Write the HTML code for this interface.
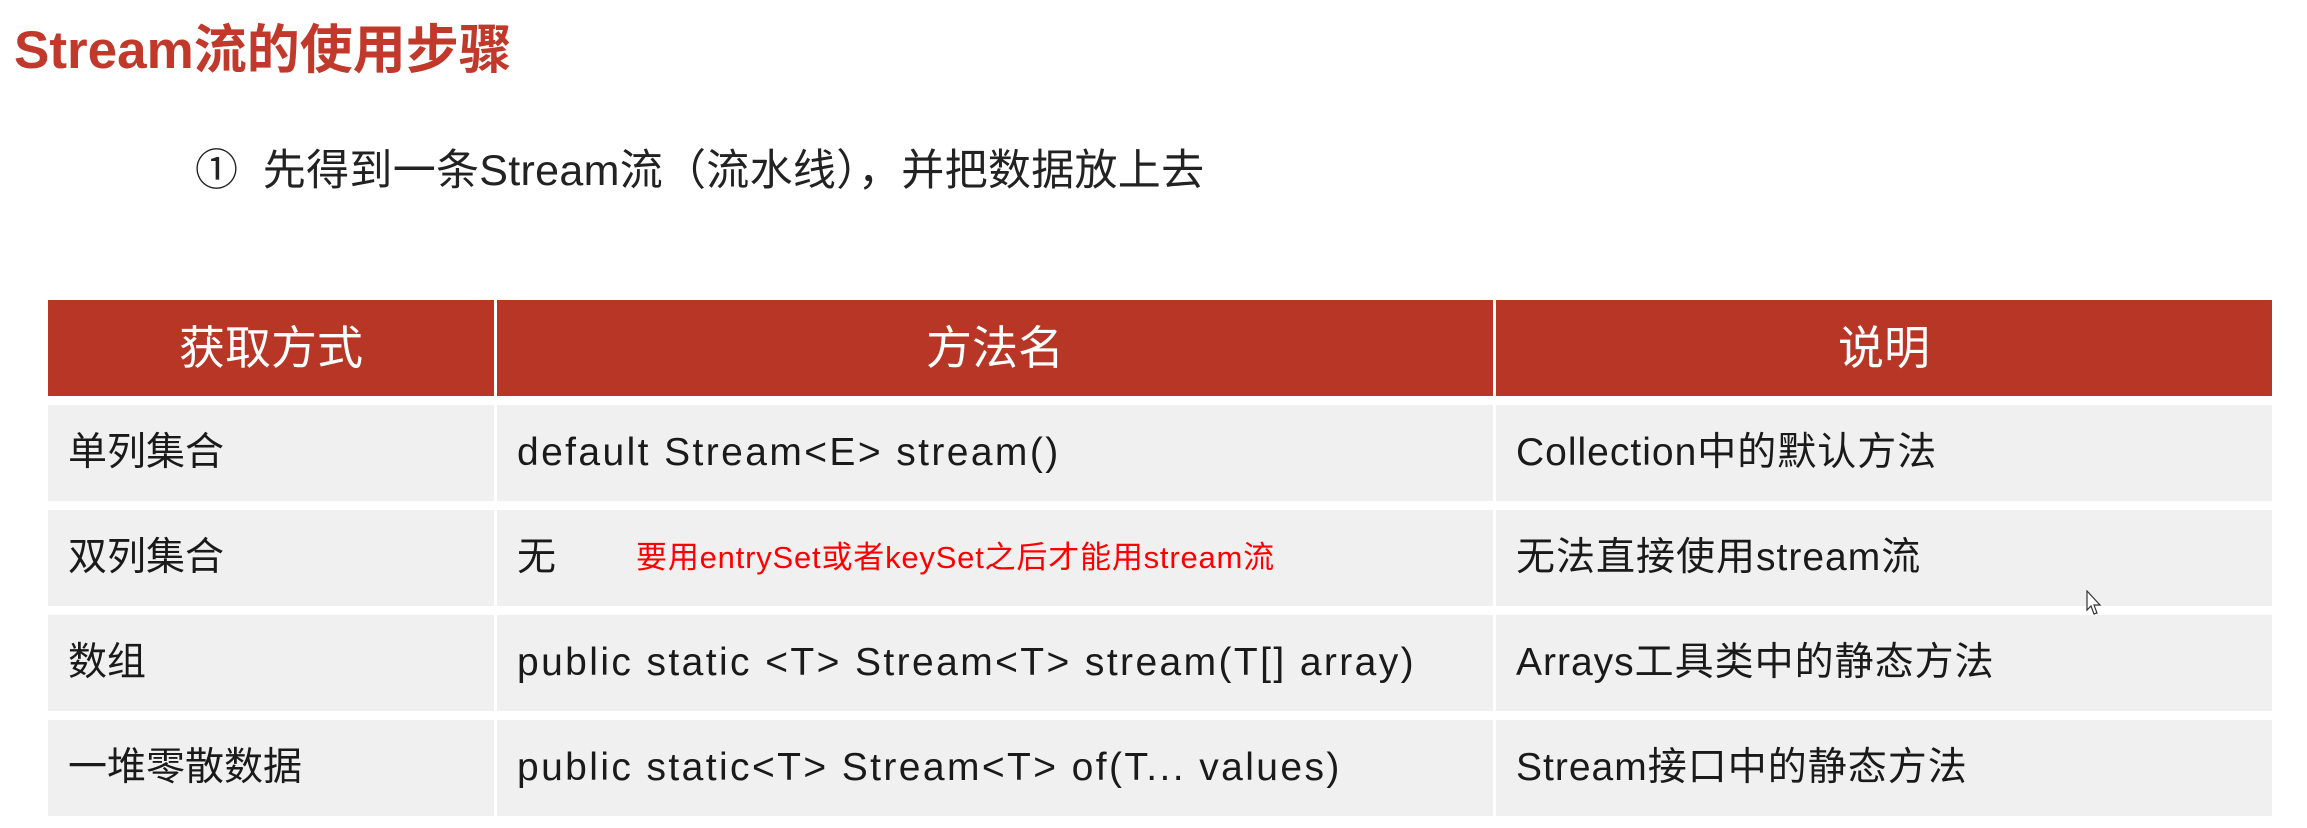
<!DOCTYPE html>
<html><head><meta charset="utf-8"><style>
body{margin:0;width:2307px;height:828px;background:#fff;position:relative;overflow:hidden;font-family:"Liberation Sans","Noto Sans CJK SC",sans-serif;}
.a{position:absolute;white-space:nowrap;}
.h{position:absolute;background:#b73626;color:#fff;font-size:46px;height:96px;line-height:96px;text-align:center;}
.c{position:absolute;background:#f0f0f0;color:#1a1a1a;font-size:39px;height:96px;line-height:96px;padding-left:20px;box-sizing:border-box;white-space:nowrap;}
.c span{vertical-align:top;}
.m{letter-spacing:2.4px;}
.d{letter-spacing:1px;}
</style></head><body>
<div class="a" style="left:14px;top:8px;font-size:53px;font-weight:bold;color:#c0392b;">Stream流的使用步骤</div>
<div class="a" style="left:195px;top:136px;font-size:43px;color:#222;letter-spacing:0.3px;">①&nbsp; 先得到一条Stream流（流水线），并把数据放上去</div>

<div class="h" style="left:48px;top:300px;width:446px;">获取方式</div>
<div class="h" style="left:497px;top:300px;width:996px;">方法名</div>
<div class="h" style="left:1496px;top:300px;width:776px;">说明</div>

<div class="c" style="left:48px;top:405px;width:446px;">单列集合</div>
<div class="c m" style="left:497px;top:405px;width:996px;">default Stream&lt;E&gt; stream()</div>
<div class="c d" style="left:1496px;top:405px;width:776px;">Collection中的默认方法</div>

<div class="c" style="left:48px;top:510px;width:446px;">双列集合</div>
<div class="c" style="left:497px;top:510px;width:996px;">无<span style="color:#f00;font-size:31px;margin-left:80px;letter-spacing:0.8px;">要用entrySet或者keySet之后才能用stream流</span></div>
<div class="c d" style="left:1496px;top:510px;width:776px;">无法直接使用stream流</div>

<div class="c" style="left:48px;top:615px;width:446px;">数组</div>
<div class="c m" style="left:497px;top:615px;width:996px;">public static &lt;T&gt; Stream&lt;T&gt; stream(T[] array)</div>
<div class="c d" style="left:1496px;top:615px;width:776px;">Arrays工具类中的静态方法</div>

<div class="c" style="left:48px;top:720px;width:446px;">一堆零散数据</div>
<div class="c m" style="left:497px;top:720px;width:996px;">public static&lt;T&gt; Stream&lt;T&gt; of(T... values)</div>
<div class="c d" style="left:1496px;top:720px;width:776px;">Stream接口中的静态方法</div>

<svg class="a" style="left:2086px;top:590px" width="16" height="26" viewBox="0 0 16 26"><path d="M1 1 L1 20 L5 16 L8 24 L11 23 L8 15 L14 15 Z" fill="#fff" stroke="#333" stroke-width="1.2"/></svg>
</body></html>
